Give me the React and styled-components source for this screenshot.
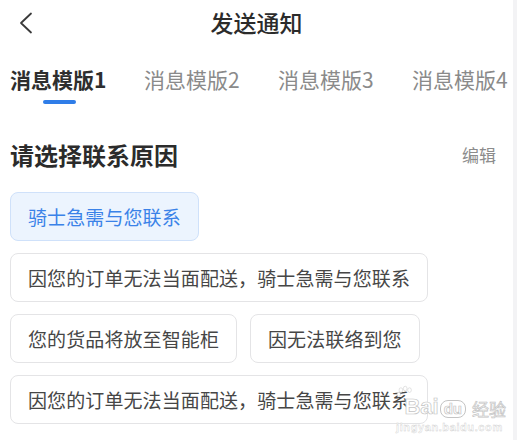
import React, { useState } from "react";
import styled, { createGlobalStyle } from "styled-components";

const Global = createGlobalStyle`
  html, body { margin: 0; padding: 0; background: #fff; }
  body { font-family: "Noto Sans CJK SC", "Noto Sans", sans-serif; color: #333; }
`;

const Page = styled.div`
  position: relative;
  display: grid;
  grid-template-columns: 513px 4px;
  width: 517px;
  height: 440px;
  overflow: hidden;
`;

const Main = styled.div`
  display: flex;
  flex-direction: column;
  min-width: 0;
`;

const Strip = styled.div`
  background: #f3f3f5;
`;

const Header = styled.div`
  position: relative;
  height: 45px;
  box-sizing: border-box;
  padding-top: 9px;
  display: flex;
  justify-content: center;
`;

const Back = styled.button`
  position: absolute;
  left: 14px;
  top: 11px;
  width: 24px;
  height: 24px;
  padding: 0;
  border: 0;
  background: none;
  display: flex;
  align-items: center;
  justify-content: center;
`;

const Title = styled.h1`
  margin: 0;
  font-size: 23px;
  font-weight: 500;
  line-height: 26px;
  color: #2b2b2b;
`;

const Tabs = styled.div`
  display: flex;
  gap: 36px;
  padding-left: 10px;
  margin-top: 21px;
  white-space: nowrap;
`;

const Tab = styled.div`
  display: flex;
  flex-direction: column;
  align-items: flex-start;
  gap: 8px;
  flex: none;
  width: 98px;
`;

const TabLabel = styled.span`
  font-size: 21px;
  line-height: 26px;
  font-weight: ${(p) => (p.$active ? 700 : 400)};
  color: ${(p) => (p.$active ? "#2e2e2e" : "#8a8a8a")};
`;

const Underline = styled.span`
  width: 33px;
  height: 4px;
  margin-left: 33px;
  border-radius: 2px;
  background: ${(p) => (p.$active ? "#2f7de8" : "transparent")};
`;

const SectionHead = styled.div`
  display: flex;
  align-items: center;
  justify-content: space-between;
  padding: 0 17px 0 10px;
  margin-top: 38px;
`;

const Heading = styled.h2`
  margin: 0;
  font-size: 24px;
  line-height: 26px;
  font-weight: 700;
  color: #2b2b2b;
`;

const Edit = styled.span`
  font-size: 17px;
  color: #8c8c8c;
  line-height: 20px;
`;

const Chips = styled.div`
  display: flex;
  flex-wrap: wrap;
  gap: 12px 13px;
  padding: 0 10px;
  margin-top: 24px;
  width: 440px;
`;

const Chip = styled.div`
  box-sizing: border-box;
  height: 49px;
  padding: 0 17px;
  display: flex;
  align-items: center;
  border-radius: 8px;
  font-size: 19px;
  letter-spacing: 0.1px;
  white-space: nowrap;
  border: 1px solid ${(p) => (p.$selected ? "#cfe1fa" : "#e4e4e6")};
  background: ${(p) => (p.$selected ? "#ecf4fe" : "#fff")};
  color: ${(p) => (p.$selected ? "#3a82e8" : "#464646")};
`;

const Watermark = styled.div`
  position: absolute;
  left: 396px;
  top: 380px;
  width: 110px;
  display: flex;
  flex-direction: column;
  pointer-events: none;
  white-space: nowrap;
`;

const WmRow = styled.div`
  display: flex;
  align-items: flex-end;
`;

const WmText = styled.span`
  font-family: "Liberation Sans", sans-serif;
  font-weight: 700;
  color: #fff;
  -webkit-text-stroke: 0.7px #c4c4c4;
  font-size: ${(p) => p.$size}px;
  line-height: 1;
`;

const WmDu = styled(WmText)`
  border: 1px solid #c4c4c4;
  border-radius: 8px;
  padding: 0 3px 1px;
  margin-left: 1px;
`;

const WmCn = styled.span`
  font-size: 17px;
  line-height: 1;
  color: #fff;
  -webkit-text-stroke: 0.7px #c4c4c4;
  margin-left: 6px;
  margin-bottom: 1px;
`;

const WmUrl = styled.span`
  font-family: "Liberation Sans", sans-serif;
  font-size: 11px;
  letter-spacing: 0.6px;
  font-weight: 700;
  color: #fff;
  -webkit-text-stroke: 0.4px #cfcfcf;
  margin-top: 3px;
`;

const tabs = ["消息模版1", "消息模版2", "消息模版3", "消息模版4"];
const reasons = [
  "骑士急需与您联系",
  "因您的订单无法当面配送，骑士急需与您联系",
  "您的货品将放至智能柜",
  "因无法联络到您",
  "因您的订单无法当面配送，骑士急需与您联系",
];

export default function App() {
  const [active] = useState(0);
  const [selected] = useState(0);
  return (
    <>
      <Global />
      <Page>
        <Main>
          <Header>
            <Back aria-label="返回">
              <svg width="16" height="22" viewBox="0 0 16 22" fill="none">
                <path d="M13 1.5L3 11l10 9.5" stroke="#3a3a3a" strokeWidth="1.8" strokeLinecap="round" strokeLinejoin="round" />
              </svg>
            </Back>
            <Title>发送通知</Title>
          </Header>
          <Tabs>
            {tabs.map((t, i) => (
              <Tab key={t}>
                <TabLabel $active={i === active}>{t}</TabLabel>
                <Underline $active={i === active} />
              </Tab>
            ))}
          </Tabs>
          <SectionHead>
            <Heading>请选择联系原因</Heading>
            <Edit>编辑</Edit>
          </SectionHead>
          <Chips>
            {reasons.map((r, i) => (
              <Chip key={i} $selected={i === selected}>{r}</Chip>
            ))}
          </Chips>
        </Main>
        <Strip />
        <Watermark>
          <WmRow>
            <svg width="30" height="30" viewBox="0 0 30 30" style={{ marginRight: -10, marginBottom: 8 }}>
              <g fill="#fff" stroke="#c8c8c8" strokeWidth="0.8">
                <ellipse cx="8" cy="7" rx="3" ry="3.8" />
                <ellipse cx="15" cy="4.5" rx="3" ry="3.8" />
                <ellipse cx="22" cy="7" rx="3" ry="3.8" />
                <ellipse cx="4.5" cy="14" rx="2.8" ry="3.4" />
              </g>
            </svg>
            <WmText $size={22}>Bai</WmText>
            <WmDu $size={15}>du</WmDu>
            <WmCn>经验</WmCn>
          </WmRow>
          <WmUrl>jingyan.baidu.com</WmUrl>
        </Watermark>
      </Page>
    </>
  );
}
